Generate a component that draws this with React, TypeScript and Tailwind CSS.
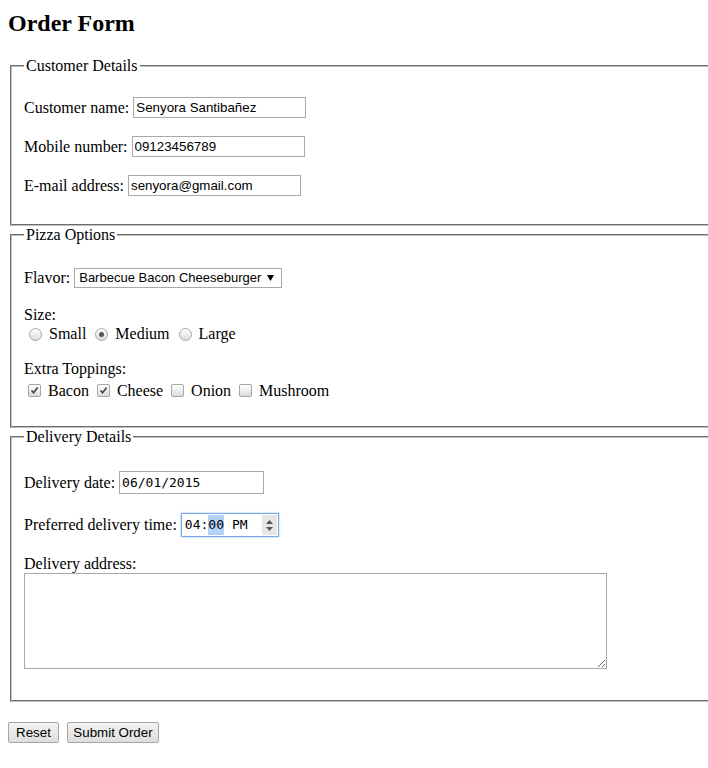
import React from "react";

const sans = "font-['Liberation_Sans',Arial,sans-serif] text-[13.33px]";
const mono = "font-['DejaVu_Sans_Mono',monospace] text-[13px]";

function Group({ title, children }: { title: string; children: React.ReactNode }) {
  return (
    <fieldset className="mx-[2px] [border:2px_groove_#c0c0c0] px-3 pt-[6px] pb-[10px]">
      <legend className="px-[2px] leading-[18px]">{title}</legend>
      {children}
    </fieldset>
  );
}

function TextBox({ value, width }: { value: string; width: string }) {
  return (
    <input
      readOnly
      value={value}
      className={`h-[21px] ${width} border border-[#a9a9a9] px-[2px] text-black ${sans} outline-none`}
    />
  );
}

function Radio({ checked }: { checked?: boolean }) {
  return (
    <span className="flex h-[13px] w-[13px] shrink-0 items-center justify-center rounded-full border border-[#a6a6a6] bg-gradient-to-b from-[#ffffff] to-[#dcdcdc]">
      {checked && <span className="h-[5px] w-[5px] rounded-full bg-[#555]" />}
    </span>
  );
}

function Check({ checked }: { checked?: boolean }) {
  return (
    <span className="flex h-[13px] w-[13px] shrink-0 items-center justify-center rounded-[2px] border border-[#a6a6a6] bg-gradient-to-b from-[#ffffff] to-[#dcdcdc]">
      {checked && (
        <svg width="9" height="9" viewBox="0 0 9 9">
          <path d="M1.5 4.5 L3.6 6.8 L7.6 1.6" fill="none" stroke="#444" strokeWidth="1.7" />
        </svg>
      )}
    </span>
  );
}

export default function App() {
  return (
    <div className="min-h-screen w-full overflow-hidden bg-white font-['Liberation_Serif','Times_New_Roman',serif] text-[16px] text-black">
      <div className="w-[760px] px-2 pt-[9px]">
        <h1 className="mb-[20px] text-[24px] leading-[28px] font-bold">Order Form</h1>

        <Group title="Customer Details">
          <div className="mt-4 flex h-[23px] items-start">
            <span className="mr-[4px] leading-[21px]">Customer name:</span>
            <TextBox value="Senyora Santibañez" width="w-[173px]" />
          </div>
          <div className="mt-4 flex h-[23px] items-start">
            <span className="mr-[4px] leading-[21px]">Mobile number:</span>
            <TextBox value="09123456789" width="w-[173px]" />
          </div>
          <div className="mt-4 mb-4 flex h-[23px] items-start">
            <span className="mr-[4px] leading-[21px]">E-mail address:</span>
            <TextBox value="senyora@gmail.com" width="w-[173px]" />
          </div>
        </Group>

        <Group title="Pizza Options">
          <div className="mt-4 flex h-[24px] items-center">
            <span className="mr-[4px]">Flavor:</span>
            <div className="flex h-[20px] w-[208px] items-center justify-between border border-[#a9a9a9] pr-[7px] pl-[4px] font-['Liberation_Sans',Arial,sans-serif] text-[13px]">
              <span>Barbecue Bacon Cheeseburger</span>
              <svg width="7" height="6" viewBox="0 0 7 6">
                <path d="M0 0 H7 L3.5 6 Z" fill="#000" />
              </svg>
            </div>
          </div>
          <div className="mt-4">
            <div className="leading-[18px]">Size:</div>
            <div className="flex h-[20px] items-center">
              <span className="ml-[5px] mr-[7px]"><Radio /></span>
              <span>Small</span>
              <span className="ml-[9px] mr-[7px]"><Radio checked /></span>
              <span>Medium</span>
              <span className="ml-[9px] mr-[7px]"><Radio /></span>
              <span>Large</span>
            </div>
          </div>
          <div className="mt-4 mb-4">
            <div className="leading-[18px]">Extra Toppings:</div>
            <div className="flex h-[22px] items-center pt-[3px]">
              <span className="ml-[4px] mr-[7px]"><Check checked /></span>
              <span>Bacon</span>
              <span className="ml-[8px] mr-[7px]"><Check checked /></span>
              <span>Cheese</span>
              <span className="ml-[8px] mr-[7px]"><Check /></span>
              <span>Onion</span>
              <span className="ml-[8px] mr-[7px]"><Check /></span>
              <span>Mushroom</span>
            </div>
          </div>
        </Group>

        <Group title="Delivery Details">
          <div className="mt-4 flex h-[29px] items-center">
            <span className="mr-[4px]">Delivery date:</span>
            <div className={`flex h-[23px] w-[145px] items-center border border-[#a9a9a9] px-[2px] ${mono}`}>
              06/01/2015
            </div>
          </div>
          <div className="mt-4 flex h-[26px] items-start">
            <span className="mr-[4px] leading-[24px]">Preferred delivery time:</span>
            <div className={`flex h-[24px] w-[98px] items-center justify-between border border-[#7aa7e8] pl-[3px] pr-[1px] shadow-[0_0_2px_#9ec0f0] ${mono}`}>
              <span className="flex items-center">
                <span>04:</span>
                <span className="bg-[#b3d1f7]">00</span>
                <span className="ml-[8px]">PM</span>
              </span>
              <span className="flex h-[20px] w-[15px] flex-col items-center justify-center gap-[3px] bg-[#e6e6e6]">
                <svg width="7" height="4" viewBox="0 0 7 4">
                  <path d="M0 4 H7 L3.5 0 Z" fill="#555" />
                </svg>
                <svg width="7" height="4" viewBox="0 0 7 4">
                  <path d="M0 0 H7 L3.5 4 Z" fill="#555" />
                </svg>
              </span>
            </div>
          </div>
          <div className="mt-4 mb-4 pb-[5px]">
            <div className="leading-[18px]">Delivery address:</div>
            <textarea className="block h-[96px] w-[583px] resize border border-[#a9a9a9] outline-none" />
          </div>
        </Group>

        <div className="mt-[20px] flex gap-[8px]">
          <button className={`h-[21px] w-[51px] rounded-[2px] border border-[#a6a6a6] bg-gradient-to-b from-[#f4f4f4] to-[#dedede] leading-[19px] text-black ${sans}`}>
            Reset
          </button>
          <button className={`h-[21px] w-[92px] rounded-[2px] border border-[#a6a6a6] bg-gradient-to-b from-[#f4f4f4] to-[#dedede] leading-[19px] text-black ${sans}`}>
            Submit Order
          </button>
        </div>
      </div>
    </div>
  );
}
